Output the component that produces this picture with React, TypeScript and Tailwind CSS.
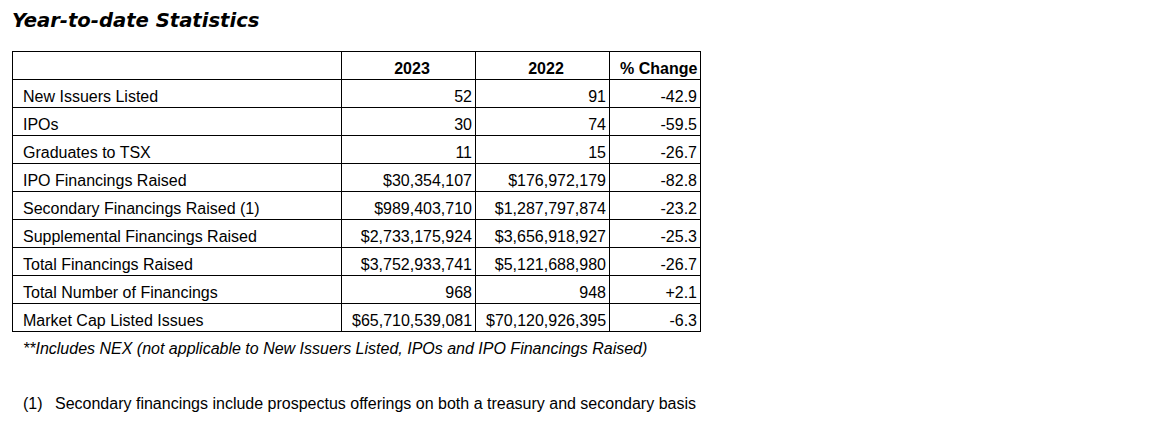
import React from "react";

const rows: [string, string, string, string][] = [
  ["New Issuers Listed", "52", "91", "-42.9"],
  ["IPOs", "30", "74", "-59.5"],
  ["Graduates to TSX", "11", "15", "-26.7"],
  ["IPO Financings Raised", "$30,354,107", "$176,972,179", "-82.8"],
  ["Secondary Financings Raised (1)", "$989,403,710", "$1,287,797,874", "-23.2"],
  ["Supplemental Financings Raised", "$2,733,175,924", "$3,656,918,927", "-25.3"],
  ["Total Financings Raised", "$3,752,933,741", "$5,121,688,980", "-26.7"],
  ["Total Number of Financings", "968", "948", "+2.1"],
  ["Market Cap Listed Issues", "$65,710,539,081", "$70,120,926,395", "-6.3"],
];

const cell =
  "h-[28px] border-r border-b border-black pl-[10px] pr-[3px] pb-[1px] align-bottom leading-[18px] whitespace-nowrap";

export default function App() {
  return (
    <div className="w-[1149px] h-[433px] bg-white text-black overflow-hidden" style={{ fontFamily: '"Liberation Sans", Arial, sans-serif' }}>
      <div className="pt-[9px] pl-[12px]">
        <h1
          className="text-[19.6px] leading-[24px] font-bold italic"
          style={{ fontFamily: '"DejaVu Sans", Verdana, sans-serif' }}
        >
          Year-to-date Statistics
        </h1>
        <table className="mt-[18px] w-[689px] table-fixed border-separate border-spacing-0 border-l border-t border-black text-[16px]">
          <colgroup>
            <col className="w-[329px]" />
            <col className="w-[134px]" />
            <col className="w-[134px]" />
            <col className="w-[91px]" />
          </colgroup>
          <thead>
            <tr>
              <th className={cell}></th>
              <th className={`${cell} font-bold text-center`}>2023</th>
              <th className={`${cell} font-bold text-center`}>2022</th>
              <th className={`${cell} font-bold text-center`}>% Change</th>
            </tr>
          </thead>
          <tbody>
            {rows.map((r) => (
              <tr key={r[0]}>
                <td className={`${cell} text-left`}>{r[0]}</td>
                <td className={`${cell} text-right`}>{r[1]}</td>
                <td className={`${cell} text-right`}>{r[2]}</td>
                <td className={`${cell} text-right`}>{r[3]}</td>
              </tr>
            ))}
          </tbody>
        </table>
        <p className="mt-[8px] pl-[11px] text-[16px] leading-[18px] italic">
          **Includes NEX (not applicable to New Issuers Listed, IPOs and IPO Financings Raised)
        </p>
        <div className="mt-[37px] pl-[11px] flex text-[16px] leading-[18px]">
          <span className="w-[32px]">(1)</span>
          <span>Secondary financings include prospectus offerings on both a treasury and secondary basis</span>
        </div>
      </div>
    </div>
  );
}
